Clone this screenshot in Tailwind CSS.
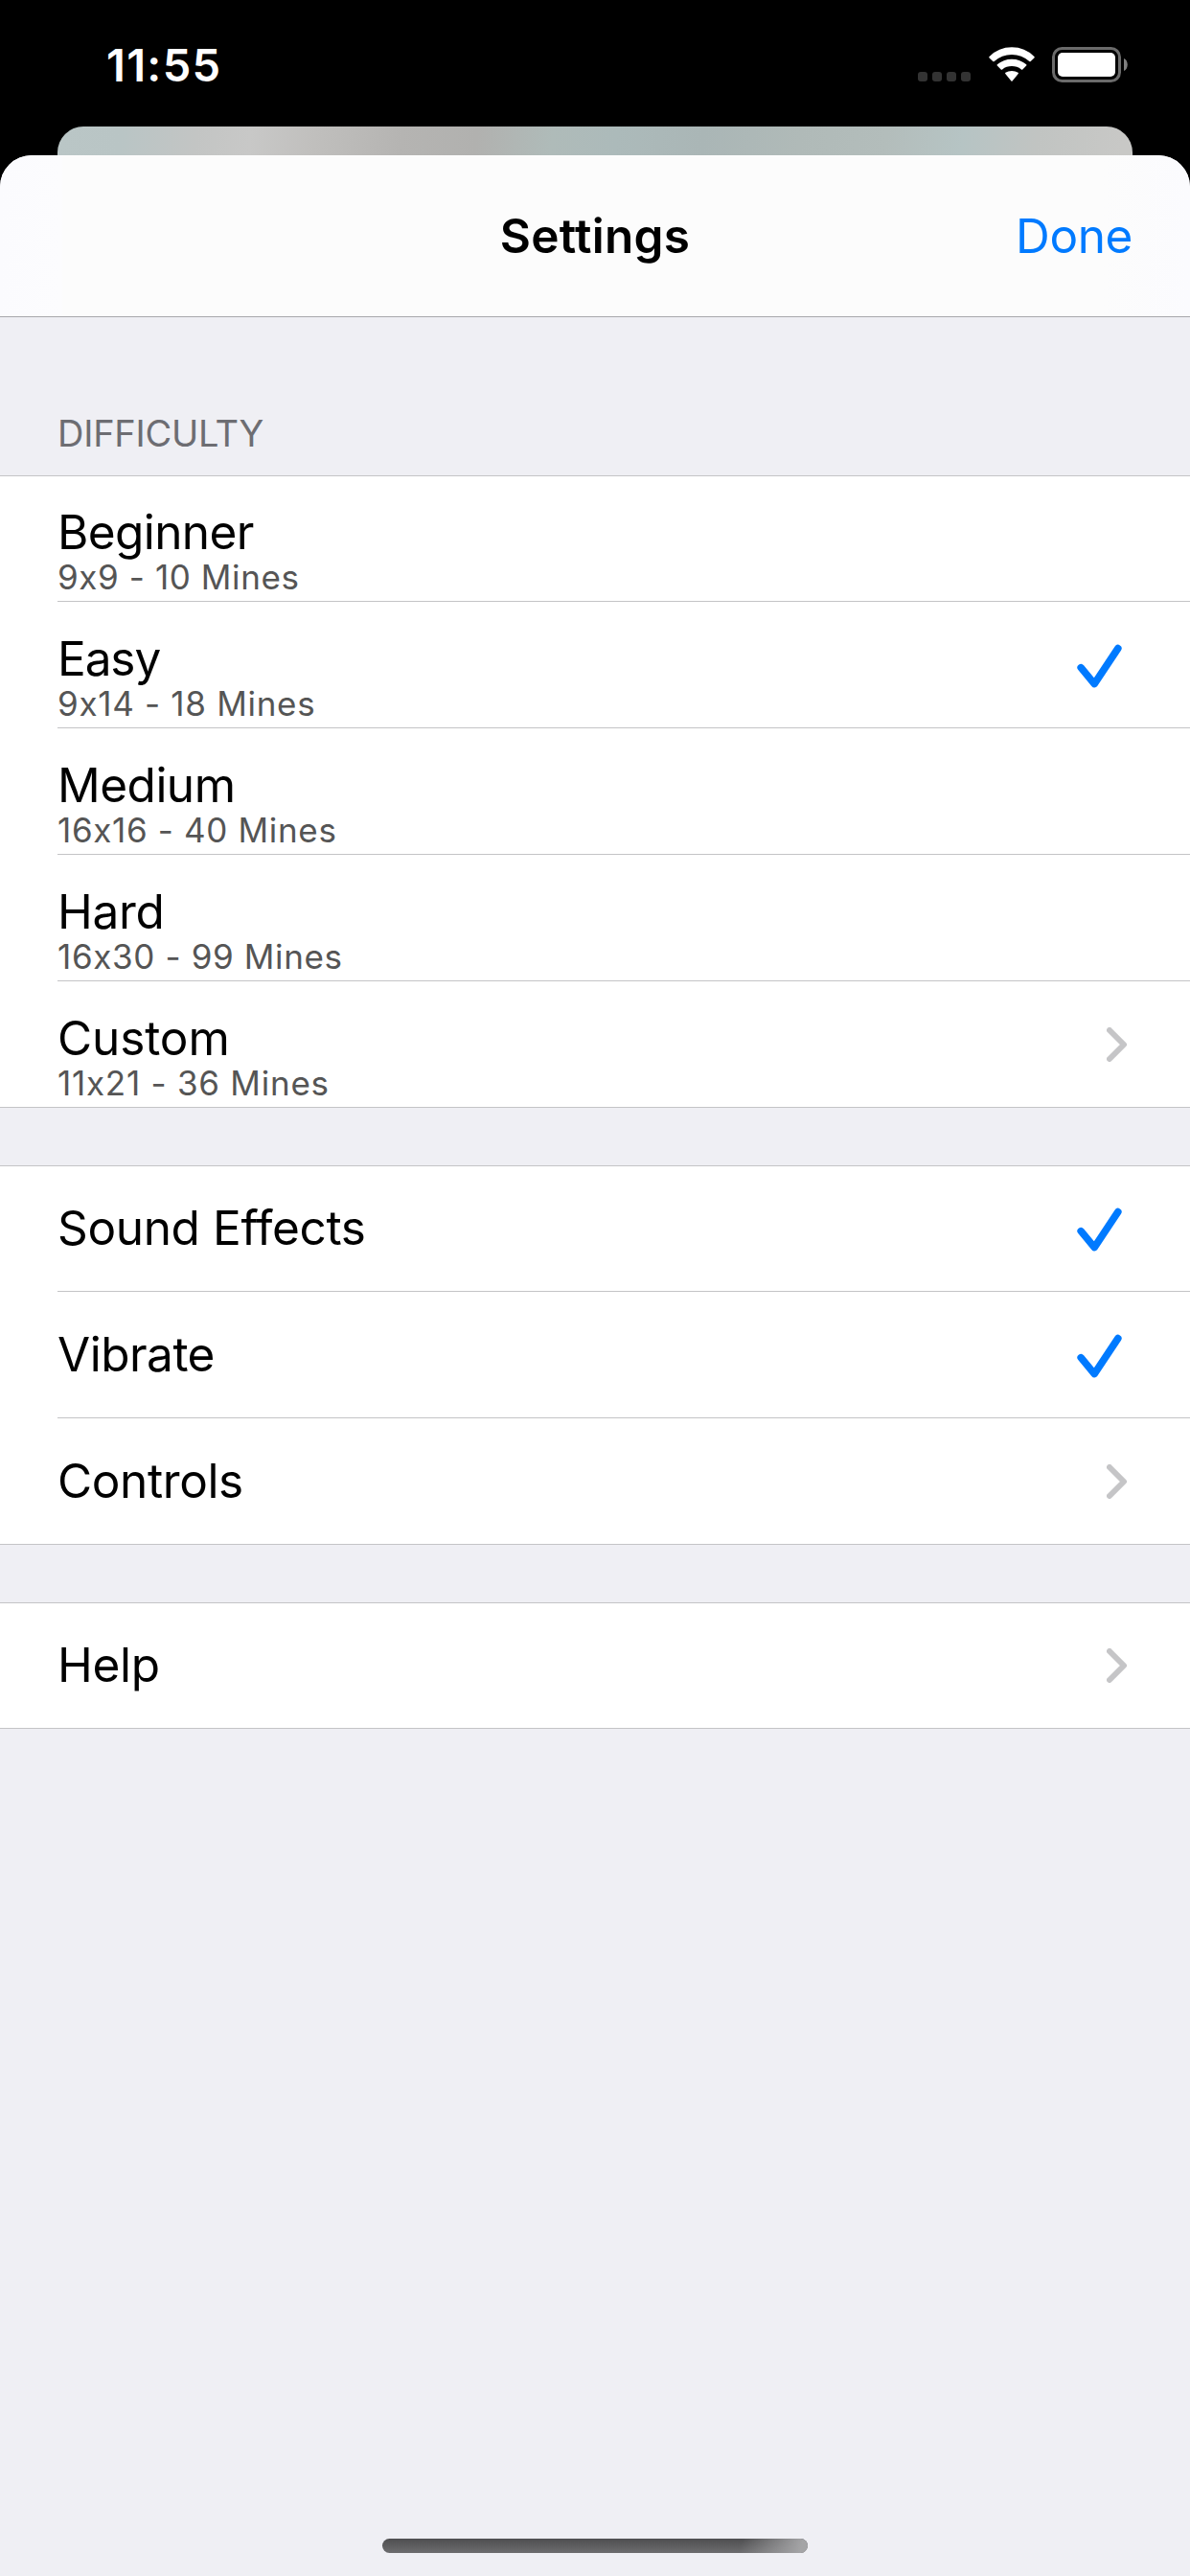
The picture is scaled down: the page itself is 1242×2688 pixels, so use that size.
<!DOCTYPE html>
<html lang="en">
<head>
<meta charset="utf-8">
<title>Settings</title>
<script src="https://cdn.jsdelivr.net/npm/@tailwindcss/browser@4"></script>
</head>
<body class="bg-black">
<svg class="hidden">
  <symbol id="check" viewBox="0 0 48 46"><path d="M5.2 24.7 19.2 41.6 43.8 4.6" fill="none" stroke="#007aff" stroke-width="7.6" stroke-linecap="round" stroke-linejoin="round"/></symbol>
  <symbol id="chevron" viewBox="0 0 22 36"><path d="M3 3 18 18 3 33" fill="none" stroke="#c5c5c7" stroke-width="6" stroke-linecap="round" stroke-linejoin="round"/></symbol>
</svg>
<div class="flex h-[2688px] w-[1242px] flex-col overflow-hidden bg-black font-['Inter',sans-serif] text-[49.5px] text-black">

  <!-- Status bar -->
  <div class="flex h-[132px] shrink-0 justify-between pt-[49px] pr-[65px] pl-[111px] text-white">
    <div class="h-[38px] text-[47px] leading-[38px] font-semibold tracking-[1.3px]">11:55</div>
    <div class="flex h-[37px]">
      <div class="mt-[26px] flex gap-[5px]">
        <span class="size-[10px] rounded-[3px] bg-[#333]"></span>
        <span class="size-[10px] rounded-[3px] bg-[#333]"></span>
        <span class="size-[10px] rounded-[3px] bg-[#333]"></span>
        <span class="size-[10px] rounded-[3px] bg-[#333]"></span>
      </div>
      <svg class="ml-[19px] h-[37px] w-[48px]" viewBox="0 0 48 37" fill="#fff">
        <path d="M.6 11.4Q-.1 10.7.6 10Q10.300 .3 24 .3T47.400 10Q48.100 10.700 47.400 11.400L43.700 15Q43 15.600 42.300 15Q34.500 7.900 24 7.900T5.700 15Q5 15.600 4.300 15Z"/>
        <path d="M8.800 19.600Q8.200 19 8.800 18.300Q15.200 12.700 24 12.700T39.200 18.300Q39.800 19 39.200 19.600L35.300 23.400Q34.600 24 33.900 23.400Q29.600 20.100 24 20.100T14.100 23.400Q13.400 24 12.700 23.400Z"/>
        <path d="M17.300 28.100Q16.700 27.400 17.400 26.800Q20.200 24.900 24 24.900T30.600 26.800Q31.300 27.400 30.700 28.100L24.600 35.400Q24 36 23.400 35.400Z"/>
      </svg>
      <svg class="ml-[18px] h-[37px] w-[79px]" viewBox="0 0 79 37">
        <rect x="1.500" y="1.500" width="69" height="34" rx="9" fill="none" stroke="#6b6b6b" stroke-width="3"/>
        <rect x="6" y="6" width="60" height="25" rx="5" fill="#fff"/>
        <path d="M75 12C80 14 80 23 75 25Z" fill="#808080"/>
      </svg>
    </div>
  </div>

  <!-- Screen behind the sheet -->
  <div class="mx-[60px] h-[30px] shrink-0 rounded-t-[27px] bg-[linear-gradient(97deg,#bac6c6_0%,#b9c5c5_6%,#c3c5c4_13%,#c8c8c7_18%,#c0bfbd_24%,#b5b4b2_32%,#b1b1af_39%,#afbbb9_46%,#acbaba_52%,#aab6b6_60%,#b0bab8_69%,#b3bdbb_77%,#b6c4c4_84%,#c1c4c2_91%,#c8c8c6_99%)]"></div>

  <!-- Sheet -->
  <main class="flex grow flex-col rounded-t-[33px] bg-[#efeff4]">
    <header class="grid h-[169px] grid-cols-[1fr_auto_1fr] items-center rounded-t-[33px] border-b border-[#a7a7ab] bg-[linear-gradient(90deg,#fbfbfe_0px,#fcfcfe_64px,#fcfcfc_66px,#fcfcfc_1150px,#fbfbfe_1242px)] px-[60px] leading-[60px]">
      <h1 class="col-start-2 font-semibold tracking-[0.3px]">Settings</h1>
      <a class="justify-self-end tracking-[-0.4px] text-[#007aff]">Done</a>
    </header>

    <h2 class="flex h-[165px] items-end pb-[20px] pl-[60px] text-[38px] leading-[48px] tracking-[-0.25px] text-[#6d6d72]">DIFFICULTY</h2>

    <section class="border-y border-[#c4c4c6] bg-white pl-[60px]">
      <div class="flex h-[131px] flex-col justify-end border-b border-[#c4c4c6] pb-[5px]">
        <div class="leading-[54px] tracking-[-0.6px]">Beginner</div>
        <div class="text-[35px] leading-[40px] tracking-[0.6px] text-[#555]">9x9 - 10 Mines</div>
      </div>
      <div class="flex h-[132px] items-center justify-between border-b border-[#c4c4c6] pr-[71px]">
        <div class="flex h-full flex-col justify-end pb-[5px]">
          <div class="leading-[54px] tracking-[-1.1px]">Easy</div>
          <div class="text-[35px] leading-[40px] tracking-[0.7px] text-[#555]">9x14 - 18 Mines</div>
        </div>
        <svg class="mt-[3px] h-[46px] w-[48px]"><use href="#check"/></svg>
      </div>
      <div class="flex h-[132px] flex-col justify-end border-b border-[#c4c4c6] pb-[5px]">
        <div class="leading-[54px] tracking-[-0.5px]">Medium</div>
        <div class="text-[35px] leading-[40px] tracking-[0.66px] text-[#555]">16x16 - 40 Mines</div>
      </div>
      <div class="flex h-[132px] flex-col justify-end border-b border-[#c4c4c6] pb-[5px]">
        <div class="leading-[54px] tracking-[-0.3px]">Hard</div>
        <div class="text-[35px] leading-[40px] tracking-[0.64px] text-[#555]">16x30 - 99 Mines</div>
      </div>
      <div class="flex h-[131px] items-center justify-between pr-[65px]">
        <div class="flex h-full flex-col justify-end pb-[5px]">
          <div class="leading-[54px] tracking-[-0.1px]">Custom</div>
          <div class="text-[35px] leading-[40px] tracking-[0.75px] text-[#555]">11x21 - 36 Mines</div>
        </div>
        <svg class="mt-px h-[36px] w-[22px]"><use href="#chevron"/></svg>
      </div>
    </section>

    <section class="mt-[60px] border-y border-[#c4c4c6] bg-white pl-[60px] leading-[60px]">
      <div class="flex h-[131px] items-center justify-between border-b border-[#c4c4c6] pr-[71px]">
        <div class="pb-[2px] tracking-[-0.35px]">Sound Effects</div>
        <svg class="mt-px h-[46px] w-[48px]"><use href="#check"/></svg>
      </div>
      <div class="flex h-[132px] items-center justify-between border-b border-[#c4c4c6] pr-[71px]">
        <div class="pb-px tracking-[-0.5px]">Vibrate</div>
        <svg class="mt-[2px] h-[46px] w-[48px]"><use href="#check"/></svg>
      </div>
      <div class="flex h-[131px] items-center justify-between pr-[65px]">
        <div class="pb-px tracking-[-0.38px]">Controls</div>
        <svg class="mt-px h-[36px] w-[22px]"><use href="#chevron"/></svg>
      </div>
    </section>

    <section class="mt-[60px] border-y border-[#c4c4c6] bg-white pl-[60px] leading-[60px]">
      <div class="flex h-[130px] items-center justify-between pr-[65px]">
        <div class="pb-[2px] tracking-[-0.3px]">Help</div>
        <svg class="h-[36px] w-[22px]"><use href="#chevron"/></svg>
      </div>
    </section>

    <!-- Home indicator -->
    <div class="mx-auto mt-auto mb-[24px] h-[15px] w-[444px] overflow-hidden rounded-full bg-linear-to-b from-[#4e4e50] to-[#6d6d6f]">
      <div class="ml-auto h-full w-[76px] bg-[linear-gradient(105deg,#a4a4a600_10%,#a4a4a6_90%)]"></div>
    </div>
  </main>
</div>
</body>
</html>
